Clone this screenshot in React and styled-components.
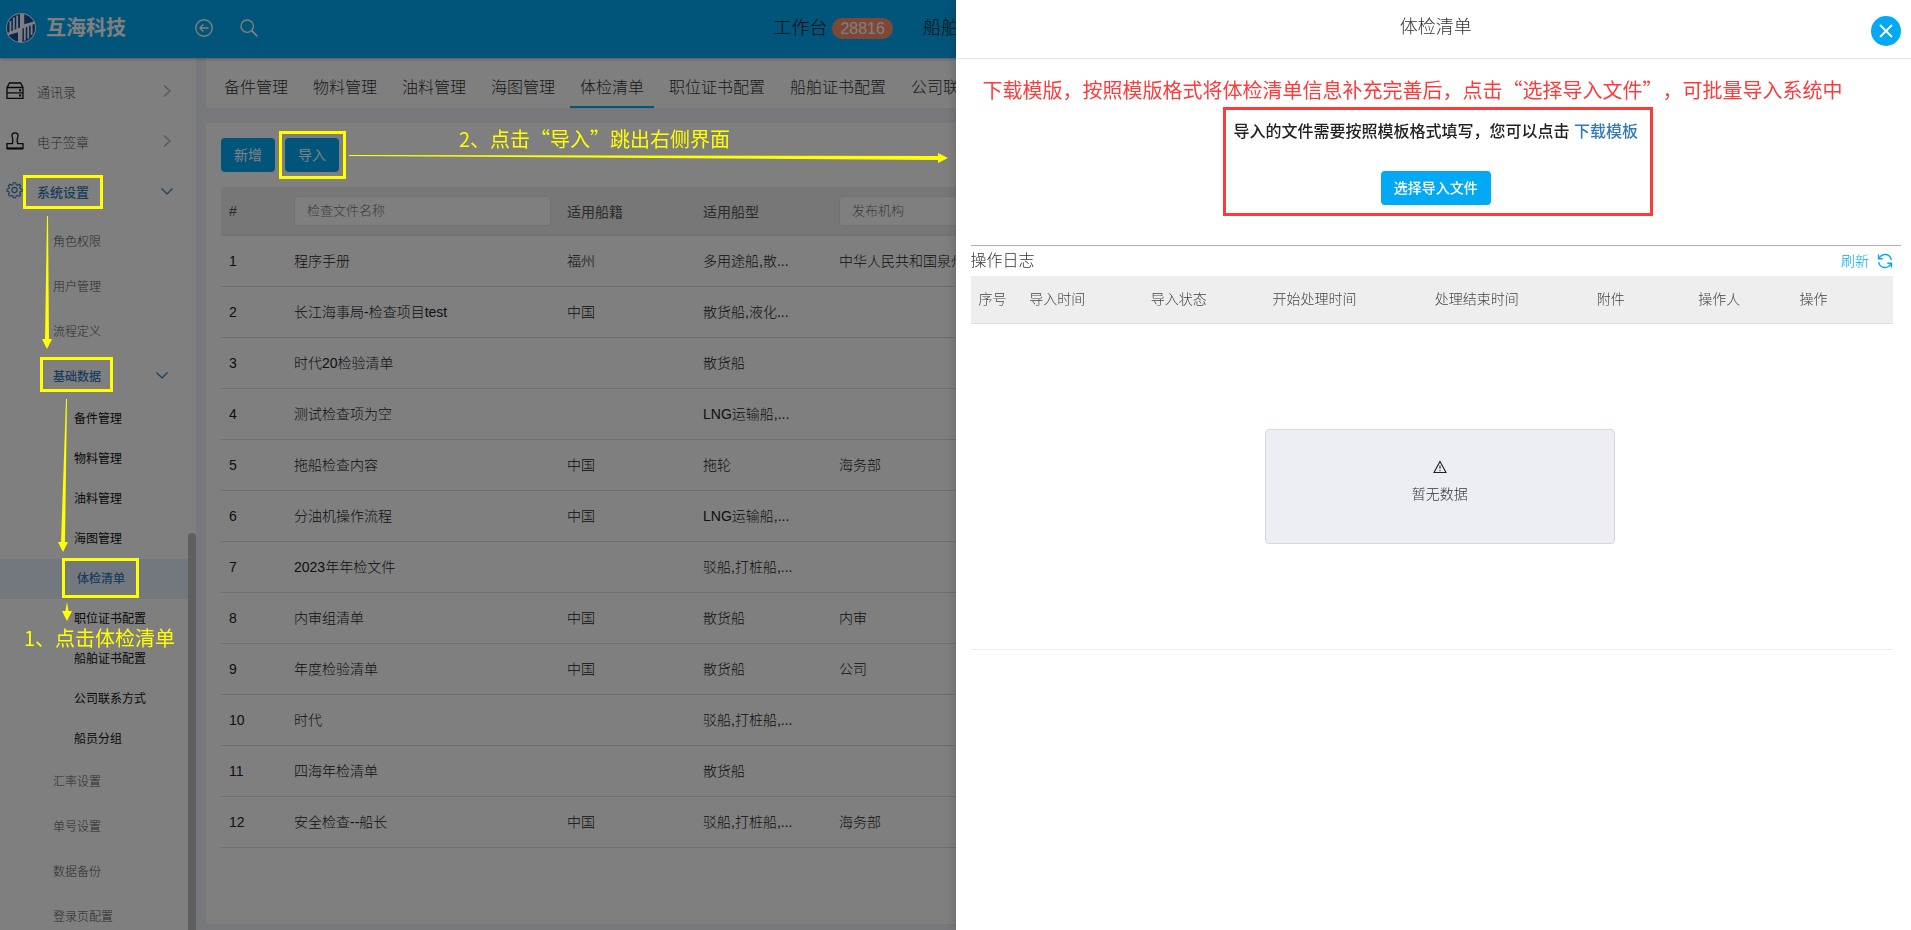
import React from "react";
import styled, { createGlobalStyle, css } from "styled-components";

const mainMenu = [
  { title: "通讯录", icon: "contacts" },
  { title: "电子签章", icon: "stamp" },
  { title: "系统设置", icon: "settings", open: true },
];

const settingsTop = ["角色权限", "用户管理", "流程定义"];
const settingsBottom = ["汇率设置", "单号设置", "数据备份", "登录页配置"];

const baseData = [
  "备件管理",
  "物料管理",
  "油料管理",
  "海图管理",
  "体检清单",
  "职位证书配置",
  "船舶证书配置",
  "公司联系方式",
  "船员分组",
];

const tabs = baseData.slice(0, 8);

const rows = [
  ["程序手册", "福州", "多用途船,散...", "中华人民共和国泉州"],
  ["长江海事局-检查项目test", "中国", "散货船,液化...", ""],
  ["时代20检验清单", "", "散货船", ""],
  ["测试检查项为空", "", "LNG运输船,...", ""],
  ["拖船检查内容", "中国", "拖轮", "海务部"],
  ["分油机操作流程", "中国", "LNG运输船,...", ""],
  ["2023年年检文件", "", "驳船,打桩船,...", ""],
  ["内审组清单", "中国", "散货船", "内审"],
  ["年度检验清单", "中国", "散货船", "公司"],
  ["时代", "", "驳船,打桩船,...", ""],
  ["四海年检清单", "", "散货船", ""],
  ["安全检查--船长", "中国", "驳船,打桩船,...", "海务部"],
];

const logColumns = [
  { title: "序号", share: 5 },
  { title: "导入时间", share: 12 },
  { title: "导入状态", share: 12 },
  { title: "开始处理时间", share: 16 },
  { title: "处理结束时间", share: 16 },
  { title: "附件", share: 10 },
  { title: "操作人", share: 10 },
  { title: "操作", share: 10 },
];

function App() {
  return (
    <>
      <GlobalStyle />
      <Page>
        <Header />
        <Main>
          <Sidebar />
          <Content />
        </Main>
      </Page>
      <Mask />
      <Drawer />
      <Hints />
    </>
  );
}

export default App;

function Header() {
  return (
    <TopBar>
      <Brand>
        <LogoIcon />
        <BrandName>互海科技</BrandName>
        <IconButton type="button" aria-label="返回">
          <svg width="20" height="20" viewBox="0 0 20 20" fill="none" stroke="#fff" strokeWidth="1.4">
            <circle cx="10" cy="10" r="8.2" />
            <path d="M14.5 10H6M9.3 6.6L5.9 10l3.4 3.4" />
          </svg>
        </IconButton>
        <IconButton type="button" aria-label="搜索">
          <svg width="20" height="20" viewBox="0 0 20 20" fill="none" stroke="#fff" strokeWidth="1.4">
            <circle cx="8.2" cy="8.2" r="6.2" />
            <path d="M12.7 12.7l5.6 5.6" strokeWidth="1.8" />
          </svg>
        </IconButton>
      </Brand>
      <TopNav>
        <TopLink href="#">
          工作台 <Badge>28816</Badge>
        </TopLink>
        <TopLink href="#">船舶</TopLink>
      </TopNav>
    </TopBar>
  );
}

function LogoIcon() {
  return (
    <svg width="30" height="30" viewBox="0 0 30 30">
      <circle cx="15" cy="15" r="15" fill="#f4f6fa" />
      <circle cx="15" cy="15" r="14" fill="#174f9e" />
      <g fill="none" stroke="#fff" strokeWidth="1.8">
        <path d="M4.400 8v11M7.800 4.500V18M11.200 2.500V17" />
        <path d="M18.800 13v14.500M22.200 12v13.500M25.600 11v11" />
      </g>
      <path d="M14 1h4.200v10.200l10.600-3 .6 2.200-13 5.200V29H12v-9.800L2 22.200l-.8-2.200L14 14.600z" fill="#fff" />
    </svg>
  );
}

function MenuIcon({ name }) {
  if (name === "contacts") {
    return (
      <svg width="18" height="18" viewBox="0 0 18 18" fill="none" stroke="#111" strokeWidth="1.3">
        <path d="M1 5.5L3.4 1h11.2L17 5.5v10.8H1zM1 5.5h16M1 10.800h16" />
        <path d="M13 8.2h2.200M13 13.6h2.200" strokeWidth="2" />
      </svg>
    );
  }
  if (name === "stamp") {
    return (
      <svg width="18" height="18" viewBox="0 0 18 18" fill="none" stroke="#111" strokeWidth="1.3">
        <path d="M1 16.6v-5h5.4c1-2.2.8-4.2-.2-6.6C5.300 2.600 6.800.8 9 .8s3.700 1.800 2.800 4.200c-1 2.400-1.200 4.400-.2 6.600H17v5z" />
        <path d="M1 16.400h16" strokeWidth="2" />
      </svg>
    );
  }
  return (
    <svg width="18" height="18" viewBox="0 0 18 18" fill="none" stroke="#337ab7" strokeWidth="1.1">
      <circle cx="8.5" cy="8" r="2.6" />
      <path d="M7.300.8h2.400l.4 1.900 1.300.6 1.700-1.100 1.600 1.700-1.100 1.600.6 1.300 1.900.4v2.200l-1.900.4-.6 1.300 1.100 1.700-1.600 1.600-1.700-1.100-1.300.6-.4 1.900H7.300l-.4-1.900-1.300-.6-1.700 1.100-1.600-1.600 1.100-1.700-.6-1.300-1.900-.4V7.200l1.900-.4.6-1.300-1.100-1.600 1.600-1.700 1.700 1.100 1.300-.6z" />
    </svg>
  );
}

function Chevron({ open }) {
  return open ? (
    <svg width="14" height="14" viewBox="0 0 14 14" fill="none" stroke="#337ab7" strokeWidth="1.2">
      <path d="M1.500 4.500l5.500 5.500 5.500-5.500" />
    </svg>
  ) : (
    <svg width="14" height="14" viewBox="0 0 14 14" fill="none" stroke="#aaa" strokeWidth="1.2">
      <path d="M4 1.500L10 7l-6 5.500" />
    </svg>
  );
}

function Sidebar() {
  return (
    <Side>
      <Menu>
        {mainMenu.map((item) => (
          <MenuLink href="#" key={item.title} $active={item.open}>
            <MenuIcon name={item.icon} />
            <MenuTitle>{item.title}</MenuTitle>
            <Chevron open={item.open} />
          </MenuLink>
        ))}
      </Menu>
      <Menu>
        {settingsTop.map((title) => (
          <SubLink href="#" key={title}>{title}</SubLink>
        ))}
        <SubLink href="#" $active>
          <MenuTitle>基础数据</MenuTitle>
          <Chevron open />
        </SubLink>
        {baseData.map((title) => (
          <LeafLink href="#" key={title} $active={title === "体检清单"}>{title}</LeafLink>
        ))}
        {settingsBottom.map((title) => (
          <SubLink href="#" key={title}>{title}</SubLink>
        ))}
      </Menu>
      <ScrollThumb />
    </Side>
  );
}

function Content() {
  return (
    <Workspace>
      <Tabs>
        {tabs.map((title) => (
          <Tab href="#" key={title} $active={title === "体检清单"}>{title}</Tab>
        ))}
      </Tabs>
      <Panel>
        <Toolbar>
          <Button type="button">新增</Button>
          <Button type="button">导入</Button>
        </Toolbar>
        <Table>
          <colgroup>
            <Col $width="65px" />
            <Col $width="273px" />
            <Col $width="136px" />
            <Col $width="136px" />
            <Col />
          </colgroup>
          <thead>
            <tr>
              <Th>#</Th>
              <Th><Filter type="text" aria-label="检查文件名称" placeholder="检查文件名称" /></Th>
              <Th>适用船籍</Th>
              <Th>适用船型</Th>
              <Th><Filter type="text" aria-label="发布机构" placeholder="发布机构" /></Th>
            </tr>
          </thead>
          <tbody>
            {rows.map((row, index) => (
              <tr key={row[0]}>
                <Td>{index + 1}</Td>
                {row.map((cell, i) => (
                  <Td key={i}>{cell}</Td>
                ))}
              </tr>
            ))}
          </tbody>
        </Table>
      </Panel>
    </Workspace>
  );
}

function Drawer() {
  return (
    <DrawerBox>
      <DrawerHeader>
        <DrawerTitle>体检清单</DrawerTitle>
        <CloseButton type="button" aria-label="关闭">
          <svg width="14" height="14" viewBox="0 0 14 14" fill="none" stroke="#fff" strokeWidth="1.8">
            <path d="M1 1l12 12M13 1L1 13" />
          </svg>
        </CloseButton>
      </DrawerHeader>
      <DrawerBody>
        <DrawerNote>下载模版，按照模版格式将体检清单信息补充完善后，点击“选择导入文件”，可批量导入系统中</DrawerNote>
        <ImportBox>
          <ImportText>
            导入的文件需要按照模板格式填写，您可以点击 <TemplateLink href="#">下载模板</TemplateLink>
          </ImportText>
          <Button type="button" $strong>选择导入文件</Button>
        </ImportBox>
        <LogSection>
          <LogHeader>
            <LogTitle>操作日志</LogTitle>
            <Refresh type="button">
              刷新
              <svg width="16" height="16" viewBox="0 0 16 16" fill="none" stroke="#03a9f4" strokeWidth="1.4">
                <path d="M1.500 1.500v4.200h4.200M2 5.500C3.300 2.900 5.400 1.500 8 1.500c3.400 0 5.800 2.400 6.300 5.500" />
                <path d="M14.500 14.500v-4.200h-4.200M14 10.500c-1.300 2.600-3.400 4-6 4-3.400 0-5.800-2.400-6.300-5.500" />
              </svg>
            </Refresh>
          </LogHeader>
          <LogTable>
            <thead>
              <tr>
                {logColumns.map((column) => (
                  <LogTh key={column.title} $share={column.share}>{column.title}</LogTh>
                ))}
              </tr>
            </thead>
            <tbody>
              <tr>
                <EmptyCell colSpan={logColumns.length}>
                  <Empty>
                    <svg width="14" height="14" viewBox="0 0 14 14" fill="none" stroke="#222" strokeWidth="1.1">
                      <path d="M7 1.500l6 11H1zM7 5.500v3.300M7 10v1.300" />
                    </svg>
                    暂无数据
                  </Empty>
                </EmptyCell>
              </tr>
            </tbody>
          </LogTable>
        </LogSection>
      </DrawerBody>
    </DrawerBox>
  );
}

// step-by-step guide drawn above the dimmed page
function Hints() {
  return (
    <HintLayer>
      <Frame $x={23} $y={175} $w={80} $h={34} />
      <Frame $x={40} $y={357} $w={73} $h={35} />
      <Frame $x={62} $y={558} $w={77} $h={40} />
      <Frame $x={279} $y={131} $w={67} $h={48} />
      <Arrows width="956" height="640" fill="#ffff00">
        <path d="M47 216h1l1 123h3l-5 10-5-10h3z" />
        <path d="M66 399h1l-2 143h3l-5 10-5-10h3z" />
        <path d="M67 602l1.500 9H72l-5 10-5-10h3.500z" />
        <path d="M349 155l589 1v-3l10 5-10 5v-3l-589-4z" />
      </Arrows>
      <Note $x={24} $y={623}>1、点击体检清单</Note>
      <Note $x={459} $y={124}>2、点击“导入”跳出右侧界面</Note>
    </HintLayer>
  );
}

const GlobalStyle = createGlobalStyle`
  body {
    margin: 0;
    overflow: hidden;
    font-family: "Liberation Sans", "Noto Sans CJK SC", sans-serif;
    font-size: 14px;
    font-weight: 300;
    color: #333;
    text-spacing-trim: space-all;
  }

  * {
    box-sizing: border-box;
  }

  a {
    text-decoration: none;
  }

  button, input {
    font-family: inherit;
  }
`;

const Page = styled.div`
  height: 100vh;
  display: flex;
  flex-direction: column;
  background: #edf0f6;
`;

const TopBar = styled.header`
  height: 58px;
  flex-shrink: 0;
  display: grid;
  grid-template-columns: 2fr 3fr;
  background: #03a9f4;
  box-shadow: 0 1px 3px rgba(0, 0, 0, 0.3);
  z-index: 1;
`;

const Brand = styled.div`
  display: flex;
  align-items: center;
  padding: 0 0 2px 6px;
`;

const BrandName = styled.span`
  margin: 0 48px 0 10px;
  font-size: 20px;
  line-height: 30px;
  font-weight: 700;
  color: #fff;
`;

const IconButton = styled.button`
  width: 20px;
  height: 20px;
  margin: 0 5px 0 20px;
  padding: 0;
  background: none;
  border: none;

  svg {
    display: block;
  }
`;

const TopNav = styled.nav`
  display: flex;
  align-items: center;
  gap: 30px;
  padding: 0 0 2px 9px;
`;

const TopLink = styled.a`
  display: flex;
  align-items: center;
  gap: 5px;
  font-size: 18px;
  line-height: 24px;
  color: #222;
  white-space: nowrap;
`;

const Badge = styled.span`
  padding: 0 8px;
  background: #ff906c;
  border-radius: 11px;
  font-size: 16px;
  line-height: 21px;
  font-weight: 400;
  color: #fff;
`;

const Main = styled.div`
  flex: 1;
  min-height: 0;
  display: flex;
`;

const Side = styled.aside`
  width: 196px;
  flex-shrink: 0;
  position: relative;
  overflow: hidden;
  display: flex;
  flex-direction: column;
  gap: 3px;
  padding: 8px 8px 0 0;
  background: #fff;
`;

const Menu = styled.nav`
  display: flex;
  flex-direction: column;
`;

const MenuTitle = styled.span`
  flex: 1;
`;

const activeText = css`
  font-weight: 500;
  color: #337ab7;
`;

const MenuLink = styled.a`
  height: 50px;
  display: flex;
  align-items: center;
  gap: 13px;
  padding: 0 14px 0 6px;
  font-size: 13px;
  color: #555;
  ${(props) => props.$active && activeText}
`;

const SubLink = styled.a`
  height: 45px;
  display: flex;
  align-items: center;
  padding: 0 19px 3px 53px;
  font-size: 12px;
  color: #555;
  ${(props) => props.$active && activeText}
`;

const LeafLink = styled.a`
  height: 40px;
  padding-left: ${(props) => (props.$active ? "77px" : "74px")};
  background: ${(props) => (props.$active ? "#e6effd" : "transparent")};
  font-size: 12px;
  line-height: 40px;
  font-weight: 400;
  color: #111;
  ${(props) => props.$active && activeText}
`;

const ScrollThumb = styled.div`
  width: 8px;
  position: absolute;
  top: 475px;
  right: 0;
  bottom: 0;
  background: #bfbfbf;
  border-radius: 4px 4px 0 0;
`;

const Workspace = styled.main`
  flex: 1;
  min-width: 0;
  display: flex;
  flex-direction: column;
  gap: 15px;
  padding: 0 10px 6px 10px;
`;

const Tabs = styled.nav`
  height: 50px;
  flex-shrink: 0;
  display: flex;
  gap: 5px;
  padding-left: 8px;
  background: #fff;
`;

const Tab = styled.a`
  display: flex;
  align-items: center;
  padding: 12px 10px 0;
  border-bottom: 2px solid ${(props) => (props.$active ? "#03a9f4" : "transparent")};
  font-size: 16px;
  line-height: 24px;
  color: #333;
  white-space: nowrap;
`;

const Panel = styled.section`
  flex: 1;
  padding: 15px;
  background: #fff;
`;

const Toolbar = styled.div`
  display: flex;
  gap: 10px;
  margin-bottom: 15px;
`;

const Button = styled.button`
  height: 34px;
  padding: 0 13px;
  background: #03a9f4;
  border: none;
  border-radius: 4px;
  font-size: 14px;
  line-height: 20px;
  font-weight: ${(props) => (props.$strong ? 500 : 400)};
  color: #fff;
`;

const Table = styled.table`
  width: 100%;
  table-layout: fixed;
  border-collapse: collapse;
`;

const Col = styled.col`
  width: ${(props) => props.$width || "auto"};
`;

const Th = styled.th`
  height: 48px;
  padding: 0 8px;
  background: #eee;
  border-bottom: 2px solid #e5e5e5;
  font-size: 14px;
  font-weight: 400;
  color: #555;
  text-align: left;
`;

const Td = styled.td`
  height: 51px;
  padding: 0 8px;
  border-bottom: 1px solid #ddd;
  font-size: 14px;
  line-height: 20px;
  color: #222;
  white-space: nowrap;
`;

const Filter = styled.input`
  width: 100%;
  height: 30px;
  display: block;
  padding: 0 12px;
  background: #fff;
  border: 1px solid #e5e5e5;
  border-radius: 4px;
  outline: none;
  font-size: 13px;
  font-weight: 300;

  &::placeholder {
    color: #777;
  }
`;

const Mask = styled.div`
  position: fixed;
  inset: 0;
  z-index: 2;
  background: rgba(0, 0, 0, 0.5);
`;

const DrawerBox = styled.section`
  width: 50%;
  position: fixed;
  top: 0;
  right: 0;
  bottom: 0;
  z-index: 3;
  background: #fff;
  box-shadow: 0 0 12px rgba(0, 0, 0, 0.2);
`;

const DrawerHeader = styled.header`
  height: 59px;
  display: flex;
  justify-content: center;
  padding: 0 10px 0 15px;
  border-bottom: 1px solid #e5e5e5;
`;

const DrawerTitle = styled.h1`
  margin: 0;
  font-size: 18px;
  line-height: 54px;
  font-weight: 300;
  color: #333;
`;

const CloseButton = styled.button`
  width: 30px;
  height: 30px;
  position: absolute;
  top: 16px;
  right: 10px;
  display: flex;
  align-items: center;
  justify-content: center;
  padding: 0;
  background: #03a9f4;
  border: none;
  border-radius: 50%;
`;

const DrawerBody = styled.div`
  display: flex;
  flex-direction: column;
  padding: 16px 10px 0 15px;
`;

const DrawerNote = styled.p`
  margin: 0 0 2px 12px;
  font-family: "Noto Sans CJK SC", sans-serif;
  font-size: 20px;
  line-height: 30px;
  font-weight: 400;
  color: #ff3a3a;
  white-space: nowrap;
`;

const ImportBox = styled.div`
  align-self: center;
  display: flex;
  flex-direction: column;
  align-items: center;
  gap: 27px;
  margin-left: 4px;
  padding: 10px 12px 8px 8px;
  border: 3px solid #ff3a3a;
`;

const ImportText = styled.p`
  margin: 0;
  font-size: 16px;
  line-height: 24px;
  font-weight: 500;
  color: #222;
  white-space: nowrap;
`;

const TemplateLink = styled.a`
  color: #337ab7;
`;

const LogSection = styled.section`
  margin-top: 29px;
  border-top: 1px solid #b0b0b0;
`;

const LogHeader = styled.div`
  height: 30px;
  display: flex;
  align-items: center;
  justify-content: space-between;
  padding-right: 8px;
`;

const LogTitle = styled.h2`
  margin: 0;
  font-size: 16px;
  line-height: 24px;
  font-weight: 300;
  color: #333;
`;

const Refresh = styled.button`
  display: flex;
  align-items: center;
  gap: 8px;
  padding: 0;
  background: none;
  border: none;
  font-size: 14px;
  line-height: 20px;
  font-weight: 300;
  color: #03a9f4;
`;

const LogTable = styled.table`
  width: calc(100% - 8px);
  table-layout: fixed;
  border-collapse: collapse;
`;

const LogTh = styled.th`
  width: ${(props) => (props.$share / 91) * 100}%;
  height: 47px;
  padding: 0 8px;
  background: #eee;
  border-bottom: 1px solid #e0e0e0;
  font-size: 14px;
  line-height: 20px;
  font-weight: 300;
  color: #444;
  text-align: left;
`;

const EmptyCell = styled.td`
  height: 326px;
  padding: 0 0 0 16px;
  border-bottom: 1px solid #eee;
`;

const Empty = styled.div`
  width: 350px;
  height: 115px;
  display: flex;
  flex-direction: column;
  align-items: center;
  justify-content: center;
  gap: 10px;
  margin: 0 auto;
  padding-bottom: 8px;
  background: #edeef3;
  border: 1px solid #d8d9de;
  border-radius: 4px;
  line-height: 20px;
`;

const HintLayer = styled.div`
  position: fixed;
  inset: 0;
  z-index: 4;
  pointer-events: none;
`;

const Frame = styled.div`
  width: ${(props) => props.$w}px;
  height: ${(props) => props.$h}px;
  position: absolute;
  left: ${(props) => props.$x}px;
  top: ${(props) => props.$y}px;
  border: 3px solid #ffff00;
`;

const Arrows = styled.svg`
  position: absolute;
  left: 0;
  top: 0;
`;

const Note = styled.p`
  position: absolute;
  left: ${(props) => props.$x}px;
  top: ${(props) => props.$y}px;
  margin: 0;
  font-family: "Noto Sans CJK SC", sans-serif;
  font-size: 20px;
  line-height: 30px;
  font-weight: 400;
  color: #ffff00;
  white-space: nowrap;
`;
